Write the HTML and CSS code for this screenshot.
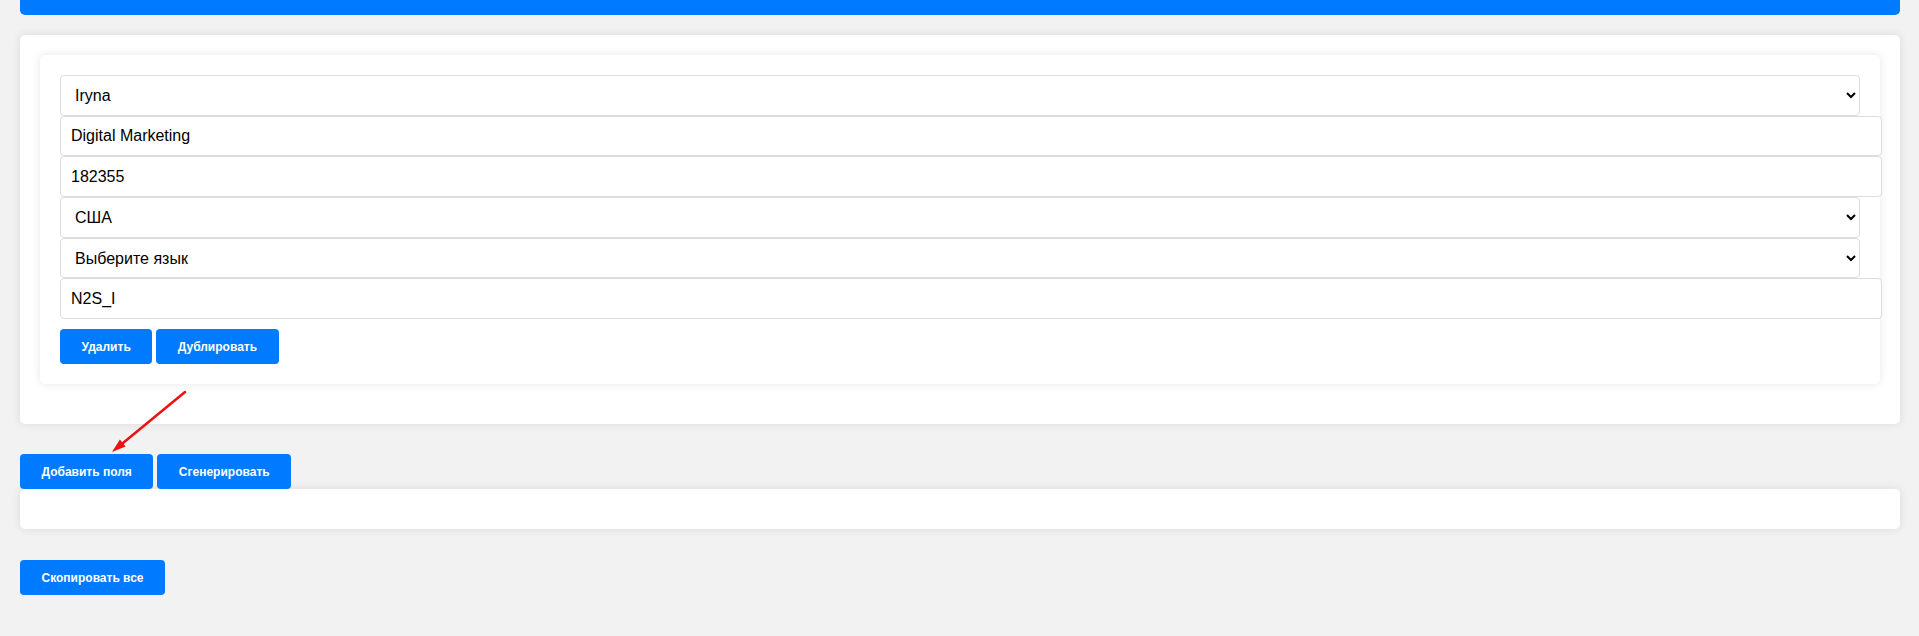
FILE: index.html
```html
<!DOCTYPE html>
<html lang="ru">
  <head>
    <meta charset="UTF-8" />
    <meta name="viewport" content="width=device-width, initial-scale=1.0" />
    <title>Генератор</title>
    <link rel="stylesheet" href="styles.css">
  </head>
  <body>
    <div class="top-bar"></div>

    <div class="form-container">
      <div class="field-group">
        <select class="field">
          <option>Iryna</option>
        </select>
        <input class="field" type="text" value="Digital Marketing" />
        <input class="field" type="text" value="182355" />
        <select class="field">
          <option>США</option>
        </select>
        <select class="field">
          <option>Выберите язык</option>
        </select>
        <input class="field" type="text" value="N2S_I" />
        <div class="group-actions">
          <button class="btn">Удалить</button>
          <button class="btn">Дублировать</button>
        </div>
      </div>
    </div>

    <div class="main-actions">
      <button class="btn">Добавить поля</button>
      <button class="btn">Сгенерировать</button>
    </div>
    <div class="output-box"></div>

    <button class="btn copy-button">Скопировать все</button>

    <!-- annotation arrow -->
    <svg class="arrow" width="120" height="80" viewBox="0 0 120 80">
      <line x1="105" y1="12" x2="43" y2="63" stroke="#f01010" stroke-width="2.5" stroke-linecap="round" />
      <polygon points="32,72 45.6,66.5 39.9,59.5" fill="#f01010" />
    </svg>
  </body>
</html>
```

FILE: styles.css
```css
/* CSS Styles */
body {
  margin: 0;
  padding: 0 19px 0 20px;
  font-family: "Liberation Sans", Arial, sans-serif;
  background: #f2f2f2;
  position: relative;
  min-height: 636px;
}

.top-bar {
  height: 15px;
  background: #007bff;
  border-radius: 0 0 5px 5px;
  margin-bottom: 20px;
}

.form-container {
  background: #fff;
  padding: 20px;
  border-radius: 5px;
  box-shadow: 0 0 10px rgba(0, 0, 0, 0.1);
}

.field-group {
  padding: 20px;
  margin-bottom: 20px;
  border-radius: 5px;
  box-shadow: 0 0 10px rgba(0, 0, 0, 0.1);
  background: #fff;
}

.field {
  display: block;
  width: 100%;
  height: 18.7px;
  padding: 10px;
  margin: 0;
  border: 1px solid #ddd;
  border-radius: 4px;
  font-family: "Liberation Sans", Arial, sans-serif;
  font-size: 16px;
  color: #000;
  background: #fff;
}

select.field {
  height: 40.7px;
  padding: 0 10px;
}

.group-actions {
  margin-top: 10px;
  display: flex;
  gap: 4px;
}

.btn {
  padding: 10.5px 21.5px;
  background: #007bff;
  color: #fff;
  border: none;
  border-radius: 4px;
  font-family: "Liberation Sans", Arial, sans-serif;
  font-size: 12px;
  font-weight: bold;
  cursor: pointer;
}

.btn:hover {
  background: #0069d9;
}

.main-actions {
  margin-top: 30px;
  display: flex;
  gap: 4px;
}

.output-box {
  height: 40px;
  background: #fff;
  border-radius: 5px;
  box-shadow: 0 0 10px rgba(0, 0, 0, 0.1);
}

.copy-button {
  margin-top: 31px;
}

.arrow {
  position: absolute;
  left: 80px;
  top: 380px;
}
```
